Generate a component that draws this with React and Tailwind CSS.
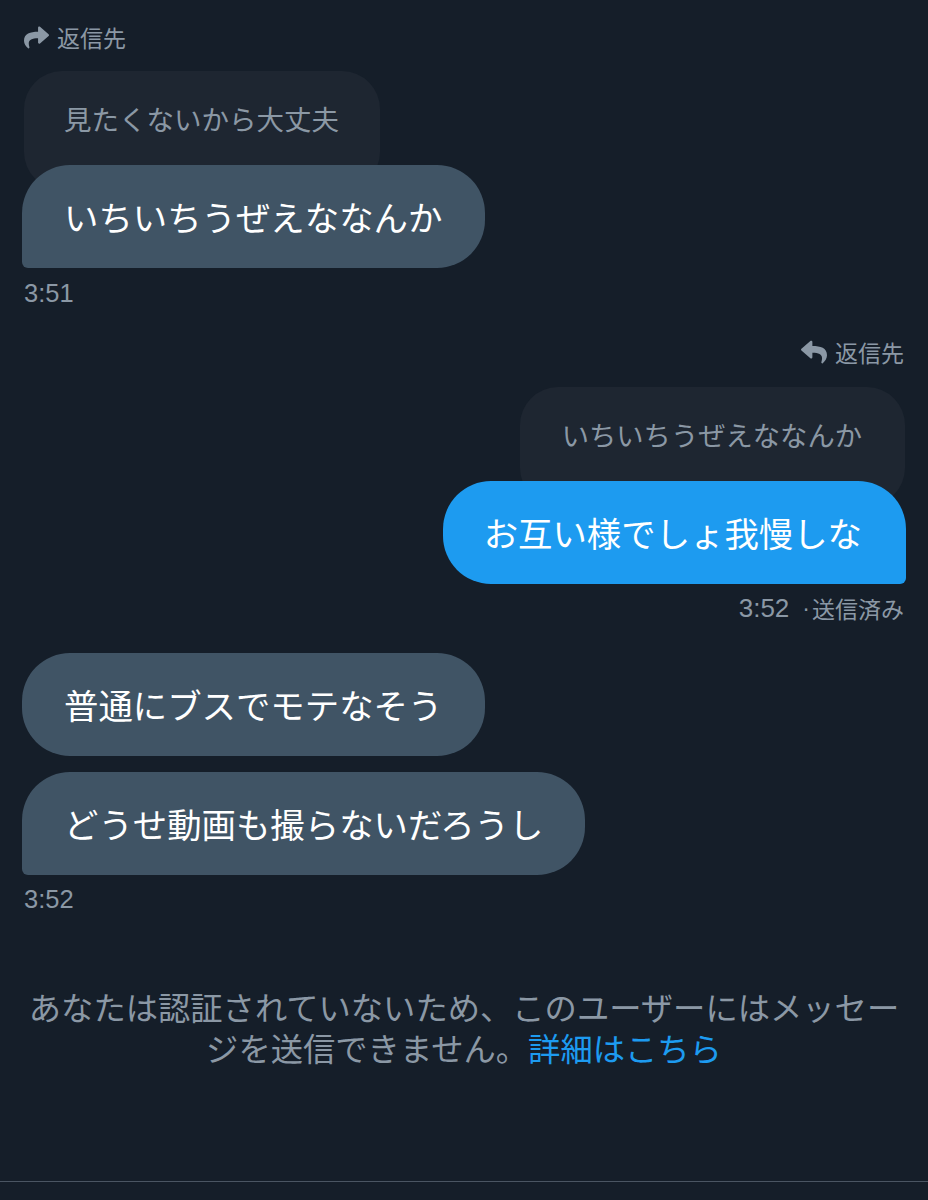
import React from "react";

function ShareIcon({ className }) {
  return (
    <svg viewBox="0 0 512 512" className={className} fill="currentColor">
      <path d="M503.691 189.836L327.687 37.851C312.281 24.546 288 35.347 288 56.015v80.053C127.371 137.907 0 170.1 0 322.326c0 61.441 39.581 122.309 83.333 154.132 13.653 9.931 33.111-2.533 28.077-18.631C66.066 312.814 132.917 274.316 288 272.085V360c0 20.7 24.3 31.453 39.687 18.164l176.004-152c11.071-9.562 11.086-26.753 0-36.328z" />
    </svg>
  );
}

function ReplyIcon({ className }) {
  return (
    <svg viewBox="0 0 512 512" className={className} fill="currentColor">
      <path d="M8.309 189.836L184.313 37.851C199.719 24.546 224 35.347 224 56.015v80.053c160.629 1.839 288 34.032 288 186.258 0 61.441-39.581 122.309-83.333 154.132-13.653 9.931-33.111-2.533-28.077-18.631 45.344-145.013-21.507-183.511-176.59-185.742V360c0 20.7-24.3 31.453-39.687 18.164l-176.004-152c-11.071-9.562-11.086-26.753 0-36.328z" />
    </svg>
  );
}

export default function App() {
  return (
    <div className="w-[928px] h-[1200px] bg-[#151e29] flex flex-col font-['Noto_Sans_CJK_JP',sans-serif] overflow-hidden">
      <div className="flex flex-col px-[22px] flex-1">
        {/* reply header 1 */}
        <div className="mt-[22px] h-[30px] flex items-center gap-[8px] pl-[2px] text-[23px] text-[#8b98a5]">
          <ShareIcon className="w-[25px] h-[25px]" />
          <span className="leading-[30px]">返信先</span>
        </div>
        <div className="mt-[19px] self-start ml-[2px] rounded-[38px] bg-[#1e2631] pl-[40px] pr-[41px] pt-[24px] pb-[49px] text-[27.5px] leading-[46px] text-[#8b98a5]">
          見たくないから大丈夫
        </div>
        <div className="-mt-[25px] self-start relative rounded-[48px] rounded-bl-[6px] bg-[#405465] pl-[42px] pr-[43px] py-[26px] text-[34.4px] leading-[51px] text-white">
          いちいちうぜえななんか
        </div>
        <div className="mt-[10px] pl-[2px] text-[25.5px] leading-[30px] text-[#8b98a5] font-['Liberation_Sans','Noto_Sans_CJK_JP',sans-serif]">
          3:51
        </div>

        {/* reply header 2 */}
        <div className="mt-[29px] self-end mr-[2px] h-[30px] flex items-center gap-[8px] text-[23px] text-[#8b98a5]">
          <ReplyIcon className="w-[26px] h-[26px]" />
          <span className="leading-[30px]">返信先</span>
        </div>
        <div className="mt-[20px] self-end mr-[1px] rounded-[38px] bg-[#1e2631] pl-[42px] pr-[43px] pt-[24px] pb-[49px] text-[27.3px] leading-[46px] text-[#8b98a5]">
          いちいちうぜえななんか
        </div>
        <div className="-mt-[25px] self-end relative rounded-[48px] rounded-br-[6px] bg-[#1d9bf0] pl-[41px] pr-[44px] py-[26px] text-[34.4px] leading-[51px] text-white">
          お互い様でしょ我慢しな
        </div>
        <div className="mt-[9px] self-end mr-[2px] flex items-center text-[23px] leading-[30px] text-[#8b98a5] font-['Liberation_Sans','Noto_Sans_CJK_JP',sans-serif]">
          <span className="text-[26px]">3:52</span>
          <span className="ml-[13px]">·</span>
          <span className="ml-[2px] font-['Noto_Sans_CJK_JP',sans-serif]">送信済み</span>
        </div>

        <div className="mt-[30px] self-start rounded-[48px] bg-[#405465] pl-[42px] pr-[43px] py-[26px] text-[34.4px] leading-[51px] text-white">
          普通にブスでモテなそう
        </div>
        <div className="mt-[16px] self-start rounded-[48px] rounded-bl-[6px] bg-[#405465] pl-[42px] pr-[42px] py-[26px] text-[34.4px] leading-[51px] text-white">
          どうせ動画も撮らないだろうし
        </div>
        <div className="mt-[9px] pl-[2px] text-[25.5px] leading-[30px] text-[#8b98a5] font-['Liberation_Sans','Noto_Sans_CJK_JP',sans-serif]">
          3:52
        </div>

        <div className="mt-[72px] flex flex-col items-center text-[32.3px] leading-[41px] text-[#8b98a5]">
          <div>あなたは認証されていないため、このユーザーにはメッセー</div>
          <div>
            ジを送信できません。<span className="text-[#1d9bf0]">詳細はこちら</span>
          </div>
        </div>
      </div>
      <div className="h-[19px] border-t border-[#4a5562]" />
    </div>
  );
}
